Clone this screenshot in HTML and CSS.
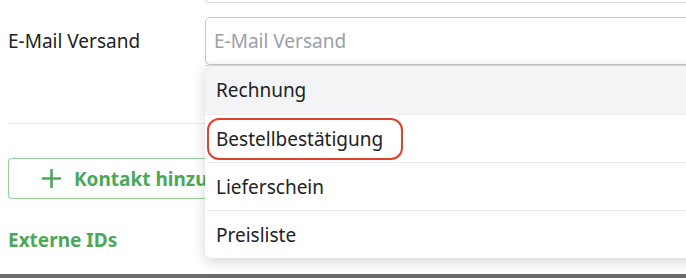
FILE: index.html
```html
<!DOCTYPE html>
<html lang="de">
<head>
<meta charset="utf-8">
<title>E-Mail Versand</title>
<link rel="stylesheet" href="styles.css">
</head>
<body>
<div class="screen">
  <div class="content">
    <div class="form-row top-row">
      <div></div>
      <div class="prev-field"></div>
    </div>
    <div class="form-row mail-row">
      <label class="label">E-Mail Versand</label>
      <div class="select-wrap">
        <div class="select-input">E-Mail Versand</div>
        <ul class="dropdown">
          <li class="option active">Rechnung</li>
          <li class="option"><span class="highlight">Bestellbestätigung</span></li>
          <li class="option">Lieferschein</li>
          <li class="option">Preisliste</li>
        </ul>
      </div>
    </div>
    <div class="divider"></div>
    <button class="add-btn" type="button">
      <svg class="plus" width="21" height="21" viewBox="0 0 21 21"><path d="M10.5 1v19M1 10.5h19" stroke="currentColor" stroke-width="2.6" fill="none"/></svg>
      <span class="btn-text">Kontakt hinzufügen</span>
    </button>
    <h3 class="section-title">Externe IDs</h3>
  </div>
  <div class="bottom-bar"></div>
</div>
</body>
</html>
```
FILE: styles.css
```css
* { box-sizing: border-box; }
html, body { margin: 0; padding: 0; background: #fff; }
body {
  font-family: "Noto Sans", "Open Sans", sans-serif;
  color: #222;
  width: 686px;
  height: 278px;
  overflow: hidden;
}
.screen { display: flex; flex-direction: column; height: 278px; }
.content {
  height: 274px;
  padding-left: 8px;
  overflow: hidden;
  position: relative;
}
.bottom-bar { height: 4px; background: #6c6c6c; }
.form-row {
  display: grid;
  grid-template-columns: 197px 1fr;
  align-items: center;
}
.prev-field {
  height: 3px;
  border: 1px solid #dcdee2;
  border-top: none;
  border-radius: 0 0 4px 4px;
  margin-right: -20px;
}
.mail-row { margin-top: 14px; }
.label { font-size: 19px; line-height: 24px; }
.select-wrap { position: relative; margin-right: -20px; }
.select-input {
  height: 48px;
  border: 1px solid #c6c9ce;
  border-radius: 5px;
  padding-left: 8px;
  display: flex;
  align-items: center;
  font-size: 19px;
  color: #9aa0a8;
}
.dropdown {
  position: absolute;
  top: 100%;
  left: 0;
  right: 0;
  margin: 0;
  padding: 0;
  list-style: none;
  background: #fff;
  border-top: 1px solid #d0d2d6;
  border-radius: 0 0 6px 6px;
  box-shadow: 0 4px 14px rgba(0,0,0,0.16);
  z-index: 5;
}
.option {
  height: 48px;
  display: flex;
  align-items: center;
  padding-left: 11px;
  font-size: 19px;
  border-top: 1px solid #ececec;
}
.option:first-child { border-top: none; }
.option.active { background: #f3f4f6; }
.highlight {
  margin-left: -9px;
  padding: 0 7px 0 7px;
  height: 42px;
  width: 196px;
  display: flex;
  align-items: center;
  border: 2px solid #e0412b;
  border-radius: 12px;
}
.divider {
  margin-top: 58px;
  height: 1px;
  background: #ececec;
}
.add-btn {
  margin-top: 34px;
  width: 198px;
  height: 41px;
  display: flex;
  align-items: center;
  gap: 12px;
  padding: 0 0 0 32px;
  background: #fff;
  border: 1px solid #93cf98;
  border-right: none;
  border-radius: 4px 0 0 4px;
  color: #4aa957;
  font-family: "Noto Sans", "Open Sans", sans-serif;
  font-weight: 700;
  font-size: 19px;
  overflow: hidden;
  white-space: nowrap;
}
.btn-text { flex: none; }
.plus { display: block; flex: none; }
.section-title {
  margin: 29px 0 0;
  font-size: 19px;
  line-height: 24px;
  font-weight: 700;
  color: #4aa957;
}
```
